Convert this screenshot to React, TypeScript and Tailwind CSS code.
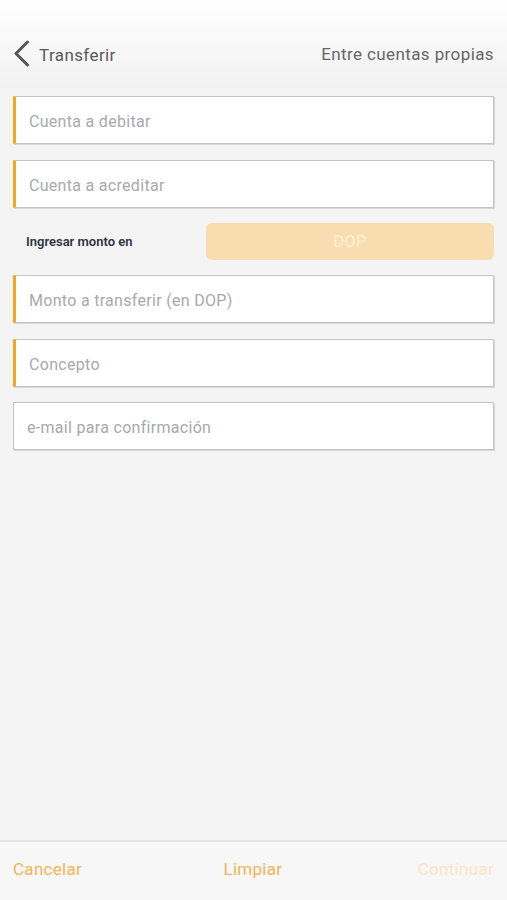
import { useState } from 'react';

const font = { fontFamily: 'Roboto, "Liberation Sans", sans-serif' };

function Field({ placeholder, required = true }: { placeholder: string; required?: boolean }) {
  return (
    <div
      className={
        'h-[48px] bg-white border-[1.5px] border-[#c4c4c4] shadow-[1px_1px_0_#d6d6d6] flex items-center pt-[3px] ' +
        (required ? 'border-l-[3px] border-l-[#f5a623] pl-[13px]' : 'pl-[13px]')
      }
    >
      <span className="text-[16px] text-[#a9a9a9] tracking-[0.3px]">{placeholder}</span>
    </div>
  );
}

export default function App() {
  const [currency] = useState('DOP');

  return (
    <div className="w-[507px] h-[900px] bg-[#f4f4f4] flex flex-col" style={font}>
      <header className="h-[88px] bg-gradient-to-b from-white to-[#f1f1f1] flex items-end px-[13px] pb-[20px]">
        <div className="flex items-center gap-[9px] flex-1">
          <svg width="17" height="27" viewBox="0 0 17 27" fill="none">
            <path d="M14.5 2 L3 13.5 L14.5 25" stroke="#555555" strokeWidth="3" strokeLinecap="round" strokeLinejoin="round" />
          </svg>
          <span className="text-[17px] text-[#5a5a5a] tracking-[0.4px] pt-[3px]">Transferir</span>
        </div>
        <span className="text-[17px] text-[#666666] tracking-[0.4px] mb-[1px]">Entre cuentas propias</span>
      </header>

      <main className="flex-1 flex flex-col px-[13px] pt-[8px] gap-[16px]">
        <Field placeholder="Cuenta a debitar" />
        <Field placeholder="Cuenta a acreditar" />
        <div className="flex items-center h-[37px] -mt-[1px] -mb-[1px]">
          <span className="w-[193px] pl-[13px] text-[13px] font-semibold text-[#2d3440]">Ingresar monto en</span>
          <button className="flex-1 h-[37px] rounded-[6px] bg-[#f9ddb0] text-white/60 text-[16px] tracking-[0.5px]">
            {currency}
          </button>
        </div>
        <Field placeholder="Monto a transferir (en DOP)" />
        <Field placeholder="Concepto" />
        <div className="-mt-[1px]">
          <Field placeholder="e-mail para confirmación" required={false} />
        </div>
      </main>

      <footer className="h-[60px] border-t-[2px] border-[#e4e4e4] bg-[#f7f7f7] flex items-center justify-between px-[13px] pb-[2px]">
        <span className="text-[17px] text-[#f2b555] tracking-[0.3px]">Cancelar</span>
        <span className="text-[17px] text-[#f2b555] tracking-[0.3px] ml-[6px]">Limpiar</span>
        <span className="text-[17px] text-[#f8e6c6] tracking-[0.3px]">Continuar</span>
      </footer>
    </div>
  );
}
